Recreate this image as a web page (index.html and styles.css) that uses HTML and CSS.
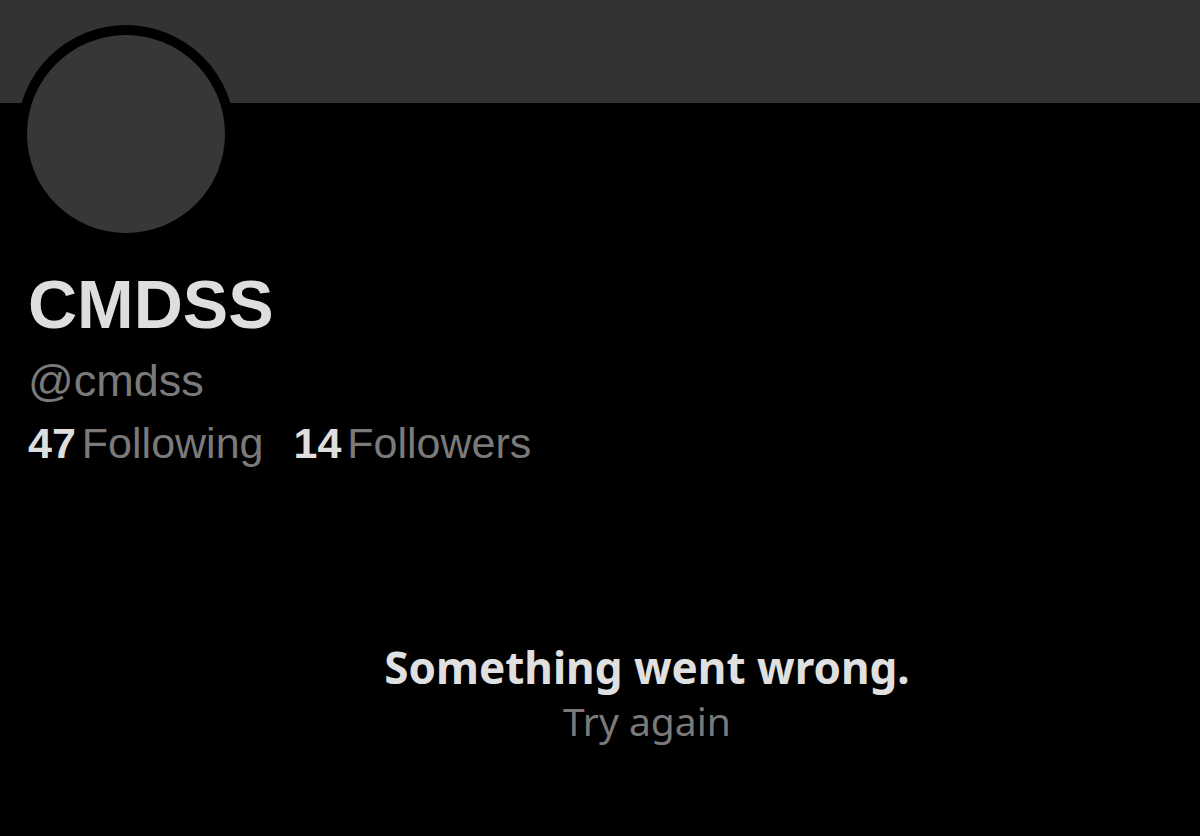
FILE: index.html
```html
<!DOCTYPE html>
<html>
<head>
<meta charset="utf-8">
<link rel="stylesheet" href="styles.css">
</head>
<body>
<div class="banner"></div>
<div class="profile">
  <div class="avatar"><div class="avatar-inner"></div></div>
  <div class="info">
    <div class="name">CMDSS</div>
    <div class="handle">@cmdss</div>
    <div class="stats">
      <span class="stat"><span class="num">47</span><span class="label">Following</span></span>
      <span class="stat"><span class="num">14</span><span class="label">Followers</span></span>
    </div>
  </div>
</div>
<div class="error">
  <div class="error-title">Something went wrong.</div>
  <div class="error-retry">Try again</div>
</div>
</body>
</html>
```

FILE: styles.css
```css
html, body {
  margin: 0;
  padding: 0;
  background: #000;
  height: 100%;
  overflow: hidden;
}
body {
  font-family: "Liberation Sans", Arial, sans-serif;
}
.banner {
  height: 103px;
  background: #333336;
}
.profile {
  display: flex;
  flex-direction: column;
  padding-left: 17px;
}
.avatar {
  width: 198px;
  height: 198px;
  border: 10px solid #000;
  border-radius: 50%;
  margin-top: -78px;
  background: #000;
}
.avatar-inner {
  width: 100%;
  height: 100%;
  border-radius: 50%;
  background: #373739;
}
.info {
  padding-left: 11px;
  display: flex;
  flex-direction: column;
}
.name {
  margin-top: 27px;
  font-size: 68px;
  line-height: 68px;
  font-weight: 700;
  color: #dedede;
}
.handle {
  margin-top: 20px;
  font-size: 45px;
  line-height: 45px;
  color: #7a7a7a;
}
.stats {
  margin-top: 19px;
  display: flex;
  gap: 30px;
  font-size: 43px;
  line-height: 43px;
}
.stat {
  display: flex;
  gap: 6px;
}
.num {
  font-weight: 700;
  color: #dedede;
}
.label {
  color: #7a7a7a;
}
.error {
  margin-top: 180px;
  padding-left: 94px;
  display: flex;
  flex-direction: column;
  align-items: center;
  font-family: "Noto Sans", "Open Sans", sans-serif;
}
.error-title {
  font-size: 44px;
  line-height: 44px;
  font-weight: 700;
  color: #e0e0e0;
}
.error-retry {
  margin-top: 12px;
  font-size: 39px;
  line-height: 40px;
  color: #7a7a7a;
}
```
